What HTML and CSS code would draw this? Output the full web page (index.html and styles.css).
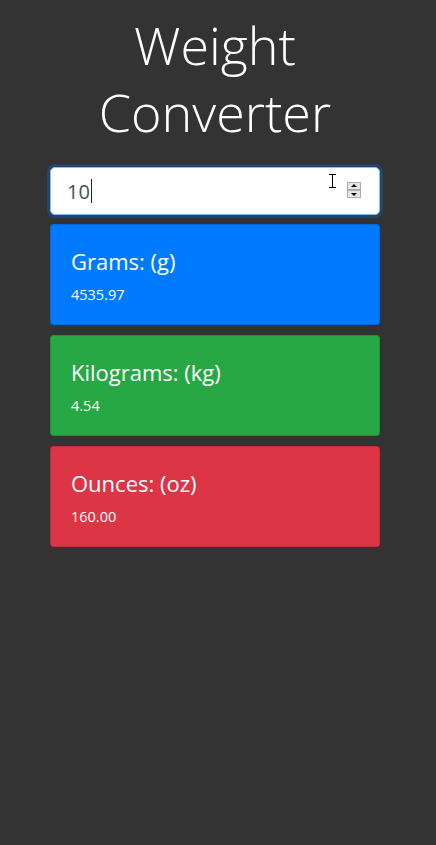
FILE: index.html
```html
<!DOCTYPE html>
<html lang="en">
<head>
<meta charset="utf-8">
<title>Weight Converter</title>
<link rel="stylesheet" href="styles.css">
</head>
<body>
<main class="wrap">
  <h1 class="title">Weight Converter</h1>
  <div class="field">
    <span class="value">10</span><span class="caret"></span>
    <span class="ibeam"></span>
    <span class="spin"><span class="spin-btn up"></span><span class="spin-btn down"></span></span>
  </div>
  <div class="card blue">
    <h4 class="card-title">Grams: (g)</h4>
    <div class="card-value">4535.97</div>
  </div>
  <div class="card green">
    <h4 class="card-title">Kilograms: (kg)</h4>
    <div class="card-value">4.54</div>
  </div>
  <div class="card red">
    <h4 class="card-title">Ounces: (oz)</h4>
    <div class="card-value">160.00</div>
  </div>
</main>
</body>
</html>
```
FILE: styles.css
```css
html, body {
  margin: 0;
  padding: 0;
  background: #333333;
  height: 100%;
}
body {
  font-family: "Open Sans", "Noto Sans", sans-serif;
  color: #ffffff;
}
.wrap {
  width: 330px;
  margin-left: 50px;
  padding-top: 11px;
  display: flex;
  flex-direction: column;
}
.title {
  margin: 0 0 22px 0;
  font-size: 52px;
  font-weight: 300;
  line-height: 67px;
  text-align: center;
  color: #ffffff;
}
.field {
  position: relative;
  box-sizing: border-box;
  height: 48px;
  border: 1px solid #80bdff;
  border-radius: 5px;
  background: #ffffff;
  box-shadow: 0 0 0 3px rgba(0, 123, 255, 0.25);
  padding: 0 16px;
  display: flex;
  align-items: center;
  color: #495057;
  font-size: 20px;
  margin-bottom: 9px;
}
.caret {
  display: inline-block;
  width: 1px;
  height: 24px;
  background: #222;
  margin-left: 1px;
}
.ibeam {
  position: absolute;
  left: 278px;
  top: 6px;
  width: 7px;
  height: 14px;
  border-top: 1px solid #000;
  border-bottom: 1px solid #000;
  box-sizing: border-box;
  background: linear-gradient(#000, #000) center / 1px 100% no-repeat;
}
.spin {
  position: absolute;
  left: 296px;
  top: 14px;
  width: 14px;
  display: flex;
  flex-direction: column;
}
.spin-btn {
  position: relative;
  height: 8px;
  box-sizing: border-box;
  border: 1px solid #adadad;
  background: #e6e6e6;
}
.spin-btn.up::after, .spin-btn.down::after {
  content: "";
  position: absolute;
  left: 3px;
  border-left: 3px solid transparent;
  border-right: 3px solid transparent;
}
.spin-btn.up::after { top: 1px; border-bottom: 3px solid #000; }
.spin-btn.down::after { top: 2px; border-top: 3px solid #000; }
.card {
  border-radius: 4px;
  border: 1px solid rgba(0, 0, 0, 0.125);
  padding: 22px 20px 19px 20px;
  margin-bottom: 10px;
}
.blue { background: #007bff; }
.green { background: #28a745; }
.red { background: #dc3545; }
.card-title {
  margin: 0 0 8px 0;
  font-size: 22px;
  font-weight: 400;
  line-height: 29px;
}
.card-value {
  font-size: 14.5px;
  line-height: 21px;
}
```
